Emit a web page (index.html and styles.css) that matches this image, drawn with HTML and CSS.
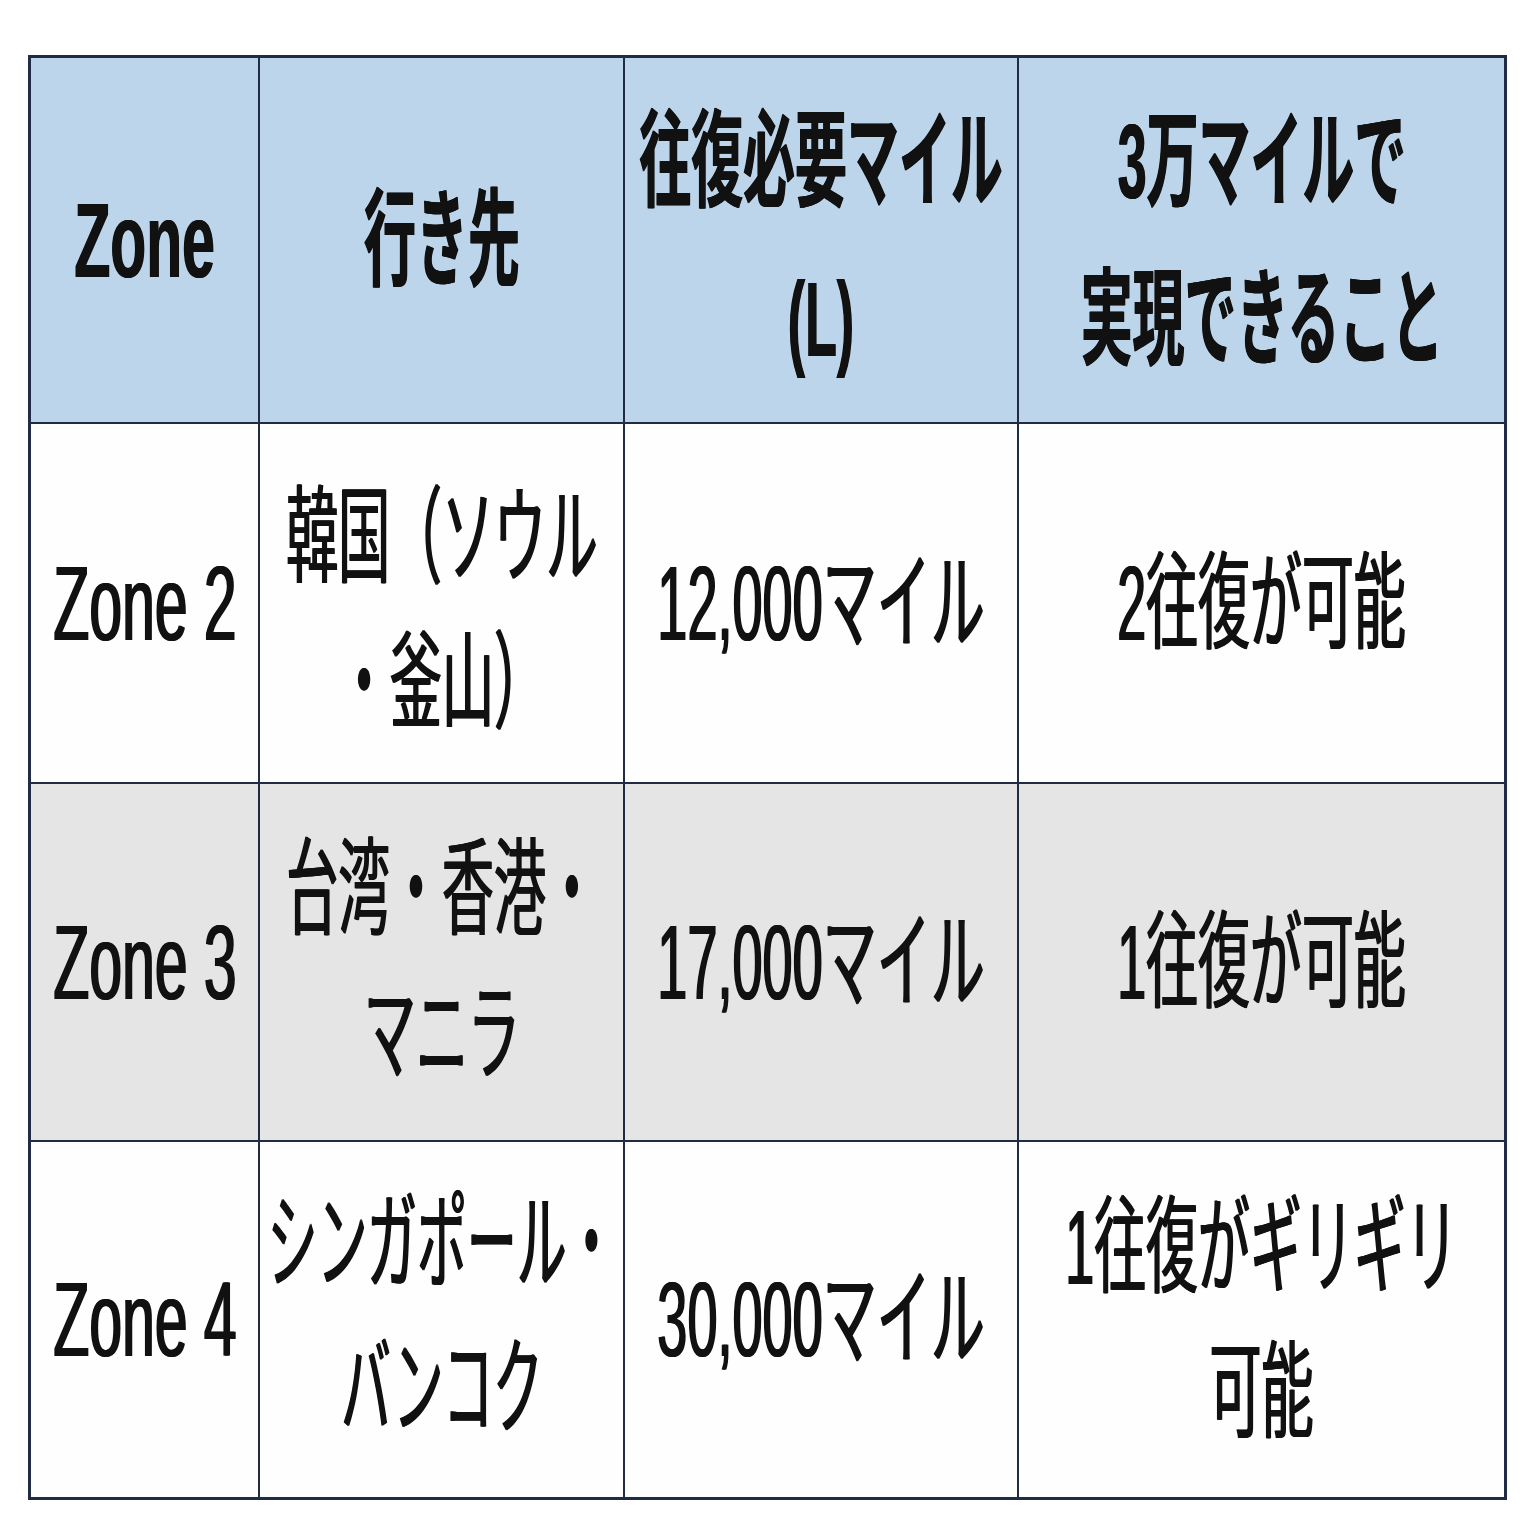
FILE: index.html
```html
<!DOCTYPE html>
<html lang="ja">
<head>
<meta charset="utf-8">
<title>Zone table</title>
<link rel="stylesheet" href="styles.css">
</head>
<body>
<div class="table">
  <div class="cell head"><span class="t zone">Zone</span></div>
  <div class="cell head"><span class="t">行き先</span></div>
  <div class="cell head"><span class="t">往復必要マイル<br>(L)</span></div>
  <div class="cell head"><span class="t">3万マイルで<br>実現できること</span></div>

  <div class="cell"><span class="t zone">Zone 2</span></div>
  <div class="cell"><span class="t two">韓国（ソウル<br>・釜山）</span></div>
  <div class="cell"><span class="t num">12,000マイル</span></div>
  <div class="cell"><span class="t">2往復が可能</span></div>

  <div class="cell gray"><span class="t zone">Zone 3</span></div>
  <div class="cell gray"><span class="t">台湾・香港・<br>マニラ</span></div>
  <div class="cell gray"><span class="t num">17,000マイル</span></div>
  <div class="cell gray"><span class="t">1往復が可能</span></div>

  <div class="cell"><span class="t zone">Zone 4</span></div>
  <div class="cell"><span class="t wide">シンガポール・<br>バンコク</span></div>
  <div class="cell"><span class="t num">30,000マイル</span></div>
  <div class="cell"><span class="t">1往復がギリギリ<br>可能</span></div>
</div>
</body>
</html>
```

FILE: styles.css
```css
html, body {
  margin: 0;
  padding: 0;
  background: #ffffff;
}

body {
  padding: 55px 0 0 28px;
  font-family: "Liberation Sans", "Noto Sans CJK JP", sans-serif;
  color: #111111;
}

.table {
  display: grid;
  width: 1473px;
  grid-template-columns: 227px 363px 392px 485px;
  grid-template-rows: 364px 358px 356px 355px;
  gap: 2px;
  background: #1f2c43;
  border: 3px solid #1f2c43;
}

.cell {
  background: #fefefe;
  display: flex;
  align-items: center;
  justify-content: center;
  text-align: center;
  font-size: 106px;
  line-height: 145px;
  font-weight: 400;
  text-shadow: 1.5px 0 0 #111111, -1.5px 0 0 #111111;
}

.cell.head {
  background: #bdd5eb;
  font-weight: 700;
  line-height: 158px;
  text-shadow: 1px 0 0 #111111, -1px 0 0 #111111;
}

.cell.gray {
  background: #e5e5e5;
}

.t {
  display: inline-block;
  white-space: nowrap;
  flex: none;
  transform: scaleX(0.49);
  transform-origin: center;
}

.t.two {
  margin-top: 14px;
}

.t.wide {
  transform: scaleX(0.47);
  margin-top: -8px;
}

.t.zone {
  transform: scaleX(0.555);
}

.t.num {
  transform: scaleX(0.51);
}
```
